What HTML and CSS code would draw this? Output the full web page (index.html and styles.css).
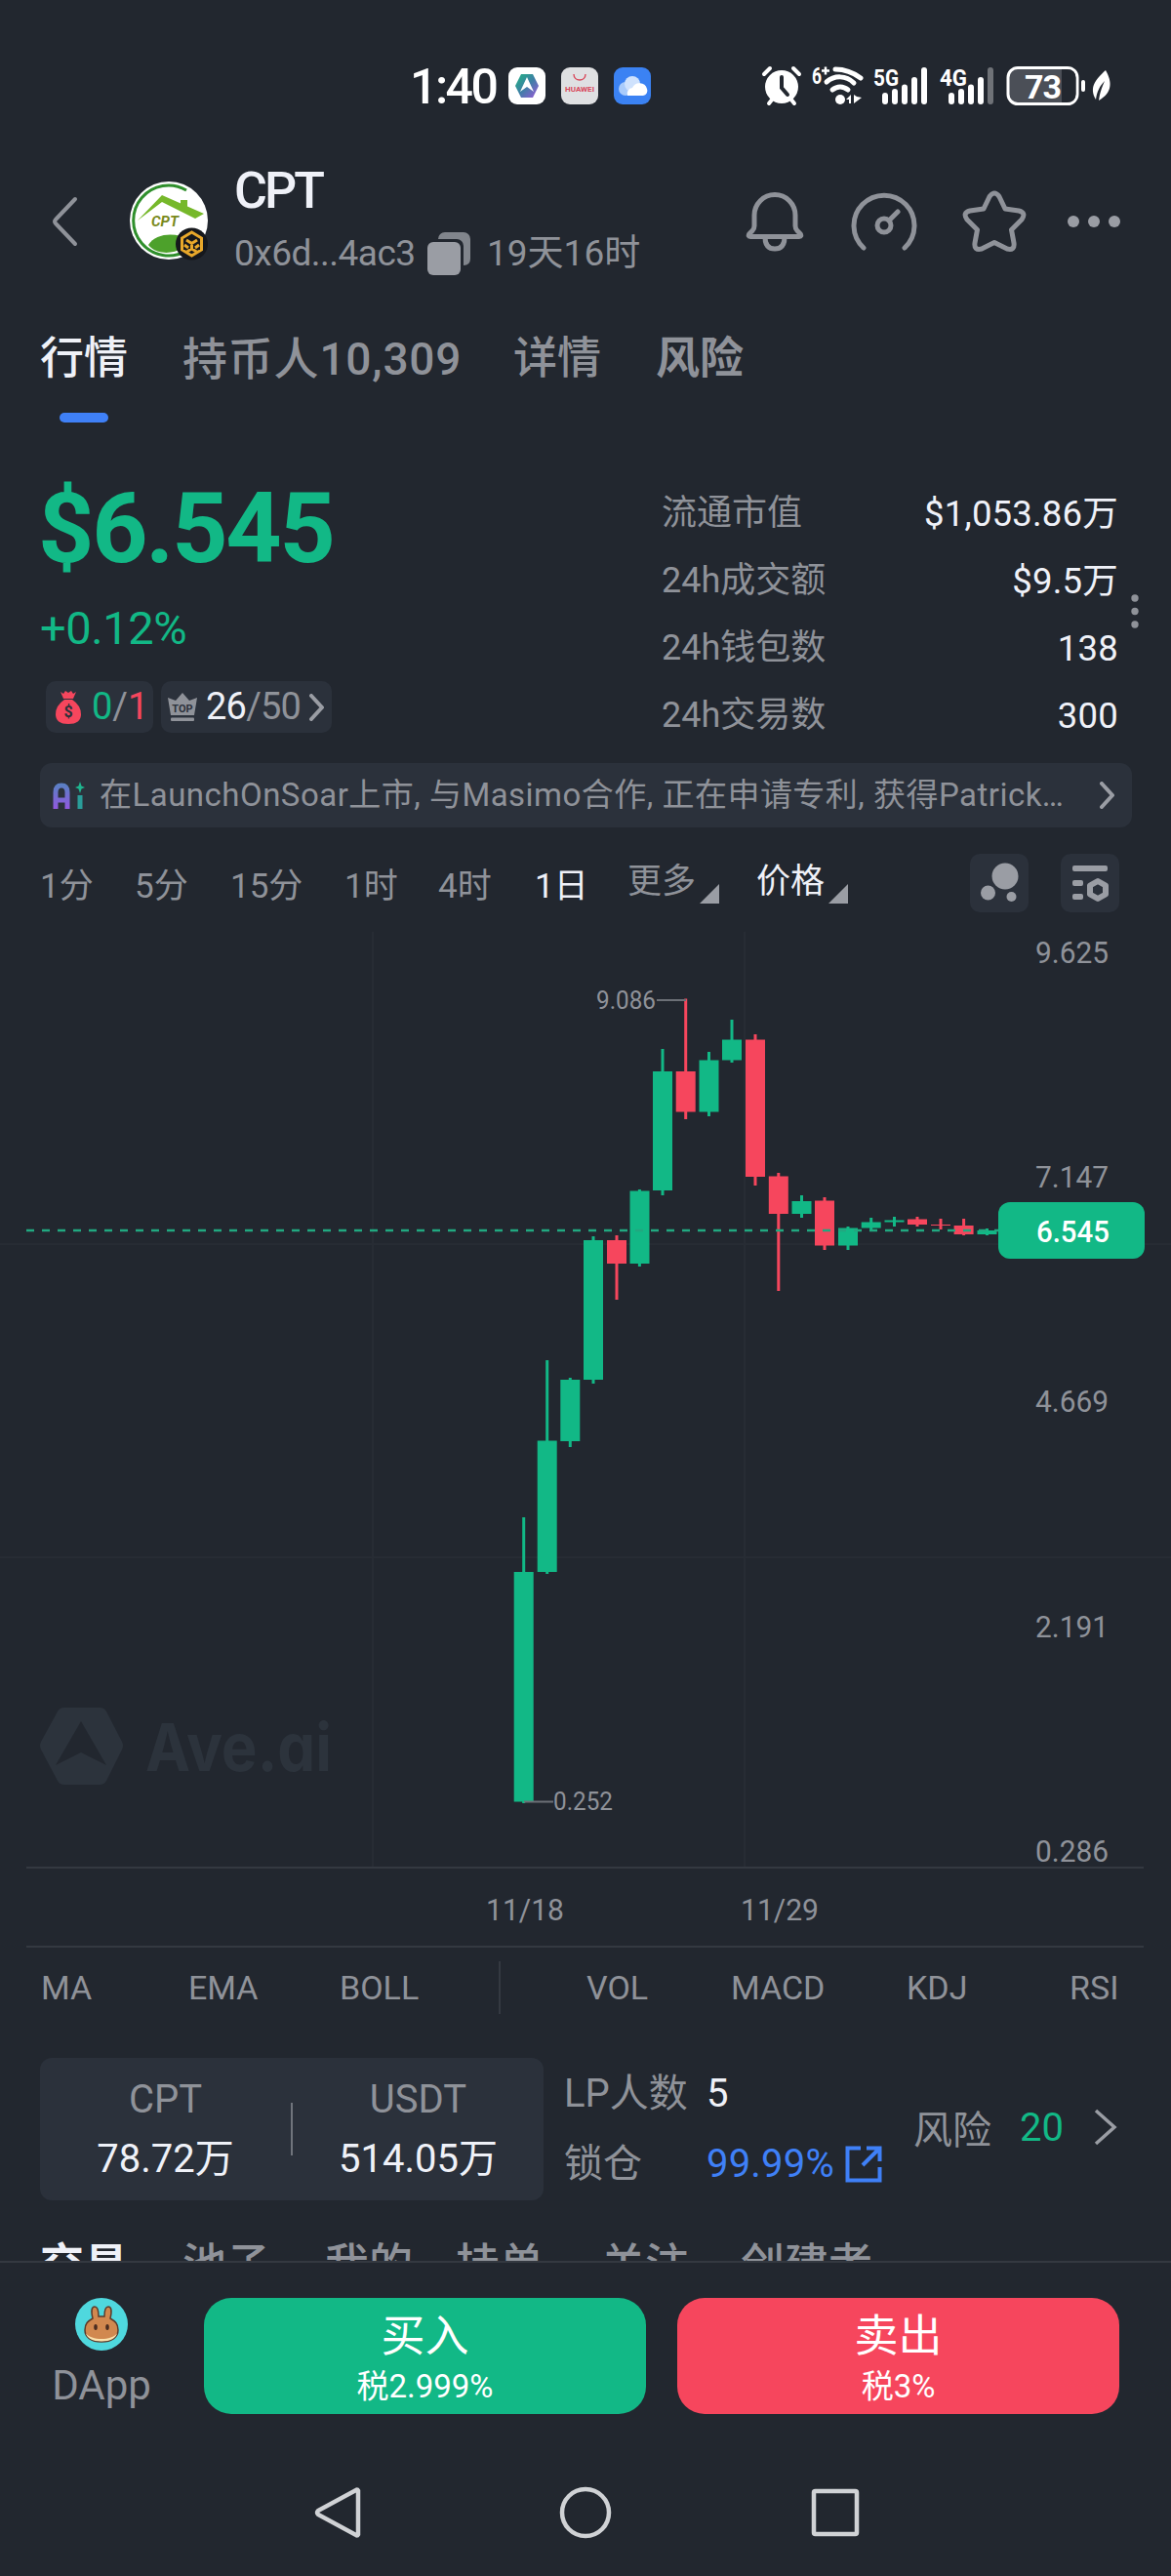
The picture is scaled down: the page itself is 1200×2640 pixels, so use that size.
FILE: index.html
```
<!DOCTYPE html>
<html lang="zh-CN">
<head>
    <meta charset="UTF-8">
    <meta name="viewport" content="width=device-width, initial-scale=1.0">
    <title>CPT 行情</title>
    <link rel="stylesheet" href="styles.css">
</head>
<body>
    <div class="phone">
        <div class="status-bar">
            <div class="clock">1:40</div>
            <svg class="app-icon" viewBox="0 0 38 38">
                <defs>
                    <linearGradient id="ave" x1="0" y1="0" x2="1" y2="1">
                        <stop offset="0.2" stop-color="#2ba08f"/>
                        <stop offset="0.5" stop-color="#3f7fa6"/>
                        <stop offset="0.9" stop-color="#8a5fd0"/>
                    </linearGradient>
                </defs>
                <rect width="38" height="38" rx="9" fill="#fff"/>
                <path d="M13 7h12l6 12-6 12H13L7 19z" fill="url(#ave)"/>
                <path d="M19 10l7 15-7-5-7 5z" fill="#fff"/>
            </svg>
            <svg class="app-icon" viewBox="0 0 38 38">
                <rect width="38" height="38" rx="9" fill="#dfe0e2"/>
                <path d="M13 7c0 8 12 8 12 0" fill="none" stroke="#d8485a" stroke-width="1.4"/>
                <text x="19" y="25" class="huawei" textLength="30" lengthAdjust="spacingAndGlyphs">HUAWEI</text>
            </svg>
            <svg class="app-icon" viewBox="0 0 38 38">
                <rect width="38" height="38" rx="9" fill="#3b82f3"/>
                <circle cx="12" cy="22" r="7" fill="#a9cbfb"/>
                <circle cx="19" cy="17" r="8" fill="#cfe2fd"/>
                <path d="M14 29a6 6 0 0 1 5-8 8 8 0 0 1 15 1 5 5 0 0 1-4 7z" fill="#fff"/>
            </svg>
            <svg class="status-icons" viewBox="0 0 362 44">
                <g fill="#fff" stroke="none">
                    <circle cx="21" cy="23" r="17"/>
                    <path d="M21 13v11l6 7" fill="none" stroke="#22272f" stroke-width="4" stroke-linecap="round"/>
                    <path d="M3 10l6-6M39 10l-6-6M8 40l4-5M34 40l-4-5" stroke="#fff" stroke-width="4" stroke-linecap="round"/>
                    <text x="52" y="20" class="net" textLength="10" lengthAdjust="spacingAndGlyphs">6</text>
                    <path d="M62 6.500h8M66 2.500v8" stroke="#fff" stroke-width="2.500"/>
                    <g fill="none" stroke="#fff" stroke-width="5" stroke-linecap="round">
                        <path d="M76 5c10 0 18 3 26 9"/>
                        <path d="M67 18c8-7 20-7 28 1"/>
                        <path d="M73 26c5-4 11-4 16 0"/>
                    </g>
                    <circle cx="81" cy="36" r="5"/>
                    <path d="M87 36l5-5v9h-2v-4zM95 31v9l8-6-5-1z"/>
                    <text x="115" y="21.500" class="net" textLength="26" lengthAdjust="spacingAndGlyphs">5G</text>
                    <text x="183" y="21.500" class="net" textLength="28" lengthAdjust="spacingAndGlyphs">4G</text>
                    <rect x="124" y="29" width="6" height="12" rx="3"/>
                    <rect x="134" y="25" width="6" height="16" rx="3"/>
                    <rect x="144" y="20.500" width="6" height="20.500" rx="3"/>
                    <rect x="154" y="13" width="6" height="28" rx="3"/>
                    <rect x="164" y="3" width="6" height="38" rx="3"/>
                    <rect x="192" y="29" width="6" height="12" rx="3"/>
                    <rect x="202" y="25" width="6" height="16" rx="3"/>
                    <rect x="212" y="20.500" width="6" height="20.500" rx="3"/>
                    <rect x="222" y="13" width="6" height="28" rx="3"/>
                    <rect x="232" y="3" width="6" height="38" rx="3" opacity=".35"/>
                </g>
                <rect x="253" y="3.500" width="71" height="37" rx="10" fill="#4b4f57" stroke="#fff" stroke-width="3"/>
                <path d="M308 5h5q9.500 0 9.500 9v16q0 9-9.500 9h-5z" fill="#22272f"/>
                <text x="288.500" y="34.500" class="battery">73</text>
                <rect x="328" y="16" width="4" height="12" rx="2" fill="#fff"/>
                <path d="M353 6c7 12 7 23-7 31 1-8 3-13 6-20-5 5-8 11-9 19-7-12-1-20 10-30z" fill="#fff"/>
            </svg>
        </div>

        <div class="header">
            <svg class="back" viewBox="0 0 30 54"><path d="M26 4L6 25q-2 2 0 4l20 21"/></svg>
            <svg class="avatar" viewBox="0 0 82 82">
                <circle cx="40" cy="40" r="40" fill="#fff"/>
                <path d="M58 9A36 36 0 1 0 58 71" fill="none" stroke="#2f8f2c" stroke-width="3"/>
                <path d="M8 40L33 14l43 19-9 5-34-17z" fill="#76b82a"/>
                <path d="M52 19h7v10l-7-3z" fill="#76b82a"/>
                <path d="M19 65c8-13 30-13 42-5-6 14-32 18-42 5z" fill="#4da12b"/>
                <text x="36" y="46" class="avatar-text" textLength="28" lengthAdjust="spacingAndGlyphs">CPT</text>
                <circle cx="63.500" cy="64" r="16.500" fill="#16181c"/>
                <g fill="none" stroke="#e9a82a" stroke-width="3">
                    <path d="M63.500 52l10 6v12l-10 6-10-6V58z"/>
                    <path d="M58 60l5.500 3.500L69 60M63.500 63v6l-5 3M63.500 69l5 3M56 65l4 3M71 65l-4 3"/>
                </g>
            </svg>
            <div class="token">
                <div class="token-name">CPT</div>
                <div class="token-meta">
                    <span class="address">0x6d...4ac3</span>
                    <svg class="copy" viewBox="0 0 44 44">
                        <path d="M11 7a7 7 0 0 1 7-7h19a7 7 0 0 1 7 7v20q0 7-7 7V14a7 7 0 0 0-7-7z" opacity=".8"/>
                        <rect y="10" width="34" height="34" rx="6"/>
                    </svg>
                    <span>19天16时</span>
                </div>
            </div>
            <div class="header-icons">
                <svg viewBox="0 0 64 64"><path d="M32 4.500a21 21 0 0 0-21 21v11q0 3-2 5l-3 3q-2 3 1 3h50q3 0 1-3l-3-3q-2-2-2-5v-11A21 21 0 0 0 32 4.500zM22 48q0 12 10 12t10-12"/></svg>
                <svg viewBox="0 0 70 64"><path d="M14 59a31 31 0 1 1 42 0M40 31l9-9"/><circle cx="35" cy="36" r="7"/></svg>
                <svg viewBox="0 0 66 64"><path d="M28 6.500q5-7 10 0l6 12.500 14 2q8 2 3 9L50.500 40.500 53 54q1 8-7 6l-13-6.500L20 60q-8 2-7-6l2.500-13.500L5 30q-5-7 3-9l14-2z"/></svg>
                <svg class="dots" viewBox="0 0 54 12"><circle cx="6" cy="6" r="6"/><circle cx="27" cy="6" r="6"/><circle cx="48" cy="6" r="6"/></svg>
            </div>
        </div>

        <div class="tabs">
            <div class="tab active">行情</div>
            <div class="tab holders">持币人10,309</div>
            <div class="tab">详情</div>
            <div class="tab bold">风险</div>
        </div>

        <div class="summary">
            <div class="summary-left">
                <div class="price">$6.545</div>
                <div class="change">+0.12%</div>
                <div class="pills">
                    <div class="pill">
                        <svg class="bag" viewBox="0 0 26 34">
                            <path d="M5 1l3 2 2-3 3 2 3-2 2 3 3-2-3 7H8z" fill="#f6465d"/>
                            <path d="M9 9h8q9 6 9 15 0 10-13 10T0 24q0-9 9-15z" fill="#f6465d"/>
                            <text x="13" y="27" class="bag-text">$</text>
                        </svg>
                        <span class="green">0</span><span>/</span><span class="red">1</span>
                    </div>
                    <div class="pill pill-top">
                        <svg class="crown" viewBox="0 0 30 30">
                            <path d="M0 5l8 3 7-8 7 8 8-3-3 18H3z"/>
                            <rect x="3" y="25.500" width="24" height="3.500" rx="1"/>
                            <text x="15" y="19.500" class="crown-text">TOP</text>
                        </svg>
                        <span class="white">26</span><span>/50</span>
                        <svg class="chev" viewBox="0 0 16 28"><path d="M3 2l11 12L3 26"/></svg>
                    </div>
                </div>
            </div>
            <div class="stats">
                <div class="stat"><span>流通市值</span><b>$1,053.86万</b></div>
                <div class="stat"><span>24h成交额</span><b>$9.5万</b></div>
                <div class="stat"><span>24h钱包数</span><b>138</b></div>
                <div class="stat"><span>24h交易数</span><b>300</b></div>
            </div>
            <svg class="more-dots" viewBox="0 0 8 36"><circle cx="4" cy="4" r="3.700"/><circle cx="4" cy="17.500" r="3.700"/><circle cx="4" cy="31" r="3.700"/></svg>
        </div>

        <div class="ai-bar">
            <svg class="ai-logo" viewBox="0 0 34 28">
                <defs>
                    <linearGradient id="ai" x1="0" y1="0" x2="0" y2="1">
                        <stop offset="0" stop-color="#5b7fc4"/>
                        <stop offset="1" stop-color="#9258e0"/>
                    </linearGradient>
                </defs>
                <path d="M3 28V11q0-7 6-7t6 7v17M3 19h12" fill="none" stroke="url(#ai)" stroke-width="5"/>
                <path d="M28 0l1.500 4.500L33 6l-3.500 1.500L28 12l-1.500-4.500L23 6l3.500-1.500z" fill="#1fb58f"/>
                <rect x="25.500" y="14" width="5" height="14" fill="#2a9d9a"/>
            </svg>
            <span class="ai-text">在LaunchOnSoar上市, 与Masimo合作, 正在申请专利, 获得Patrick…</span>
            <svg class="chev" viewBox="0 0 16 28"><path d="M3 2l11 12L3 26"/></svg>
        </div>

        <div class="timeframes">
            <span>1分</span>
            <span>5分</span>
            <span>15分</span>
            <span>1时</span>
            <span>4时</span>
            <span class="white">1日</span>
            <span class="drop">更多<i class="tri"></i></span>
            <span class="drop white">价格<i class="tri"></i></span>
            <svg class="tool" viewBox="0 0 60 60">
                <circle cx="36" cy="23" r="13.500"/><circle cx="18.500" cy="40" r="7.500"/><circle cx="42.500" cy="44" r="5"/>
            </svg>
            <svg class="tool" viewBox="0 0 60 60">
                <rect x="12" y="12" width="36" height="6" rx="2"/>
                <rect x="12" y="27" width="11" height="6" rx="2"/>
                <rect x="12" y="41" width="11" height="6" rx="2"/>
                <path d="M38 28l8 4.500v9L38 46l-8-4.500v-9z" fill="none" stroke="#9a9da4" stroke-width="6" stroke-linejoin="round"/>
            </svg>
        </div>

        <svg class="chart" viewBox="0 950 1200 1046">
            <g class="grid">
                <path d="M382 955V1914M763 955V1914M0 1275H1200M0 1596H1200"/>
            </g>
            <g class="axis-line">
                <path d="M27 1914H1172M27 1995H1172"/>
            </g>

            <g class="watermark">
                <path d="M66 1750h36q5 0 7 4l16 31q2 4 0 8l-16 32q-2 4-7 4H66q-5 0-7-4l-17-32q-2-4 0-8l17-31q2-4 7-4zM83 1764l-26 45 26-13 26 13z" fill-rule="evenodd"/>
                <text x="149" y="1815" textLength="191" lengthAdjust="spacingAndGlyphs">Ave.ai</text>
            </g>

            <g class="up">
                <path d="M536.700 1555V1848M560.700 1394V1613M584.300 1412V1483M608 1267V1418M655.400 1219V1298M679 1075V1225M726.500 1078V1144M750 1045V1089M821.500 1225V1248M869 1257V1281M892.700 1248V1262M916.500 1247V1257M1011.500 1259V1266"/>
                <rect x="526.700" y="1611" width="20" height="235.500"/>
                <rect x="550.700" y="1476.500" width="20" height="134.500"/>
                <rect x="574.300" y="1414" width="20" height="63"/>
                <rect x="598" y="1271" width="20" height="143"/>
                <rect x="645.500" y="1220.500" width="20" height="74.500"/>
                <rect x="669" y="1098" width="20" height="122"/>
                <rect x="716.500" y="1086.500" width="20" height="53"/>
                <rect x="740" y="1065.500" width="20" height="21"/>
                <rect x="811.500" y="1231" width="20" height="13"/>
                <rect x="859" y="1258.500" width="20" height="18"/>
                <rect x="882.700" y="1252.500" width="20" height="6"/>
                <rect x="906.500" y="1250.500" width="20" height="2"/>
                <rect x="1001.500" y="1261" width="20" height="4"/>
            </g>
            <g class="down">
                <path d="M632 1266V1332M702.700 1023.500V1147M774 1060V1215M797.800 1202V1323M845 1227V1281M940 1247V1257M964 1249V1260M987.600 1249V1266"/>
                <rect x="622" y="1271" width="20" height="24"/>
                <rect x="692.700" y="1098" width="20" height="41.500"/>
                <rect x="764" y="1065.500" width="20" height="140.500"/>
                <rect x="787.800" y="1205.500" width="20" height="38.500"/>
                <rect x="835" y="1230.500" width="20" height="46"/>
                <rect x="930" y="1249.500" width="20" height="5.500"/>
                <rect x="954" y="1255" width="20" height="1"/>
                <rect x="977.600" y="1256" width="20" height="9"/>
            </g>
            <path class="last-line" d="M27 1261H1023"/>

            <g class="mark">
                <path d="M673 1025H703M537 1846.500H567"/>
                <text x="611" y="1034" textLength="61" lengthAdjust="spacingAndGlyphs">9.086</text>
                <text x="567" y="1855" textLength="61" lengthAdjust="spacingAndGlyphs">0.252</text>
            </g>
            <g class="axis">
                <text x="1061" y="987" textLength="75" lengthAdjust="spacingAndGlyphs">9.625</text>
                <text x="1061" y="1217" textLength="75" lengthAdjust="spacingAndGlyphs">7.147</text>
                <text x="1061" y="1447" textLength="75" lengthAdjust="spacingAndGlyphs">4.669</text>
                <text x="1061" y="1678" textLength="75" lengthAdjust="spacingAndGlyphs">2.191</text>
                <text x="1061" y="1908" textLength="75" lengthAdjust="spacingAndGlyphs">0.286</text>
                <text x="498" y="1968" textLength="80" lengthAdjust="spacingAndGlyphs">11/18</text>
                <text x="759" y="1968" textLength="80" lengthAdjust="spacingAndGlyphs">11/29</text>
                <rect x="1023" y="1232" width="150" height="58" rx="12" fill="#12b886"/>
                <text x="1062" y="1273" class="tag" textLength="75" lengthAdjust="spacingAndGlyphs">6.545</text>
            </g>
        </svg>

        <div class="indicators">
            <span>MA</span>
            <span>EMA</span>
            <span>BOLL</span>
            <i class="divider"></i>
            <span>VOL</span>
            <span>MACD</span>
            <span>KDJ</span>
            <span>RSI</span>
        </div>

        <div class="pool">
            <div class="pool-card">
                <div class="pool-item"><span>CPT</span><b>78.72万</b></div>
                <i class="pool-divider"></i>
                <div class="pool-item"><span>USDT</span><b>514.05万</b></div>
            </div>
            <div class="lp">
                <div class="lp-row"><span>LP人数</span><b>5</b></div>
                <div class="lp-row">
                    <span>锁仓</span><b class="blue">99.99%</b>
                    <svg class="link" viewBox="0 0 38 38"><path d="M16 2.500H2.500v33h33V22M22 2.500h13.500V16M35 3L18 20"/></svg>
                </div>
            </div>
            <div class="risk">
                <span>风险</span>
                <b class="green">20</b>
                <svg class="risk-chev" viewBox="0 0 24 38"><path d="M2 2l19 17L2 36"/></svg>
            </div>
        </div>

        <div class="sub-tabs">
            <span class="white">交易</span>
            <span>池子</span>
            <span>我的</span>
            <span>挂单</span>
            <span>关注</span>
            <span>创建者</span>
        </div>

        <div class="action-bar">
            <div class="dapp">
                <svg viewBox="0 0 54 54">
                    <circle cx="27" cy="27" r="27" fill="#4fd8de"/>
                    <g stroke="#5b3a2b" stroke-width="1.500">
                        <path d="M27 45c-11 0-17-5-17-12s3-9 8-12c-2-8-1-12 2-12s4 4 4 10h6c0-6 1-10 4-10s4 4 2 12c5 3 8 5 8 12s-6 12-17 12z" fill="#d1884f"/>
                    </g>
                    <path d="M11 36c5 8 27 8 32 0-1 5-7 8.500-16 8.500S12 41 11 36z" fill="#fbe3ae"/>
                    <ellipse cx="21" cy="30" rx="1.800" ry="3" fill="#4a2c20"/>
                    <ellipse cx="33" cy="30" rx="1.800" ry="3" fill="#4a2c20"/>
                </svg>
                <span>DApp</span>
            </div>
            <div class="btn btn-buy"><b>买入</b><span>税2.999%</span></div>
            <div class="btn btn-sell"><b>卖出</b><span>税3%</span></div>
        </div>

        <div class="nav-bar">
            <svg viewBox="0 0 54 54"><path d="M49 4.500v45q-1 2-3 0L8 29q-2-2 0-4L46 4.500q2-2 3 0z"/></svg>
            <svg viewBox="0 0 54 54"><circle cx="27" cy="27" r="24"/></svg>
            <svg viewBox="0 0 54 54"><rect x="6" y="5" width="44" height="44" rx="1.500"/></svg>
        </div>
    </div>
</body>
</html>
```
FILE: styles.css
```
* {
    margin: 0;
    padding: 0;
    box-sizing: border-box;
}

body {
    width: 1200px;
    background: #22272f;
    font-family: Roboto, 'Noto Sans CJK SC', sans-serif;
    color: #8f9299;
}

b {
    font-weight: 400;
    color: #eff1f8;
}

i {
    font-style: normal;
}

svg {
    display: block;
    flex-shrink: 0;
}

.phone {
    height: 2640px;
    overflow: hidden;
}

.green, b.green {
    color: #12b886;
}

.red {
    color: #f6465d;
}

.blue, b.blue {
    color: #3f80f7;
}

.white {
    color: #eff1f8;
}

/* status bar */
.status-bar {
    height: 176px;
    display: flex;
    align-items: center;
    padding-left: 420px;
}

.clock {
    width: 101px;
    font-size: 50px;
    line-height: 50px;
    padding-top: 2px;
    font-weight: 500;
    letter-spacing: -2.5px;
    color: #fff;
}

.app-icon {
    width: 38px;
    height: 38px;
    margin-right: 16px;
}

.huawei {
    font-size: 8px;
    font-weight: 700;
    fill: #d8485a;
    text-anchor: middle;
}

.status-icons {
    width: 362px;
    height: 44px;
    margin-left: 97px;
}

.net {
    font-size: 23px;
    font-weight: 700;
    fill: #fff;
}

.battery {
    font-size: 34px;
    font-weight: 700;
    letter-spacing: -1px;
    fill: #fff;
    text-anchor: middle;
}

/* token header */
.header {
    height: 102px;
    display: flex;
    align-items: center;
    padding: 0 52px 0 51px;
}

.back {
    width: 30px;
    height: 54px;
}

.back path {
    fill: none;
    stroke: #8f9299;
    stroke-width: 4;
    stroke-linecap: round;
}

.avatar {
    width: 82px;
    height: 82px;
    margin-left: 52px;
}

.avatar-text {
    font-size: 15px;
    font-weight: 700;
    font-style: italic;
    fill: #7a8a1c;
    text-anchor: middle;
}

.token {
    margin-left: 25px;
    padding-top: 2px;
}

.token-name {
    height: 64px;
    line-height: 64px;
    font-size: 52px;
    font-weight: 500;
    letter-spacing: -3px;
    color: #eff1f8;
}

.token-meta {
    height: 64px;
    line-height: 64px;
    font-size: 37px;
    display: flex;
    align-items: center;
}

.address {
    width: 198px;
    letter-spacing: -0.5px;
}

.copy {
    width: 44px;
    height: 44px;
    margin-right: 17px;
    fill: #9a9da4;
}

.header-icons {
    margin-left: auto;
    display: flex;
    align-items: center;
}

.header-icons svg {
    width: 64px;
    height: 64px;
    fill: none;
    stroke: #8f9299;
    stroke-width: 5;
    stroke-linecap: round;
    stroke-linejoin: round;
    margin-right: 45px;
}

.header-icons svg:nth-child(2) {
    width: 70px;
}

.header-icons svg:nth-child(3) {
    width: 66px;
    margin-right: 42px;
}

.header-icons .dots {
    width: 54px;
    height: 12px;
    margin: 0;
    fill: #9a9da4;
    stroke: none;
}

/* tabs */
.tabs {
    height: 178px;
    display: grid;
    grid-template-columns: 146px 339px 146px auto;
    align-items: center;
    padding: 2px 0 0 41px;
    font-size: 45px;
    font-weight: 500;
}

.tab {
    position: relative;
    line-height: 60px;
    white-space: nowrap;
}

.tab.holders {
    font-size: 46px;
    letter-spacing: 0.8px;
}

.tab.bold {
    font-weight: 700;
}

.tab.active {
    color: #eff1f8;
}

.tab.active::after {
    content: '';
    position: absolute;
    left: 20px;
    top: 85px;
    width: 50px;
    height: 10px;
    border-radius: 5px;
    background: #3f80f7;
}

/* price and stats */
.summary {
    position: relative;
    height: 310px;
    display: flex;
    justify-content: space-between;
    padding: 36px 54px 0 41px;
}

.price {
    margin-left: -2px;
    font-size: 100px;
    line-height: 100px;
    font-weight: 700;
    letter-spacing: -2.2px;
    color: #12b886;
}

.change {
    margin-top: 29px;
    font-size: 47px;
    line-height: 46px;
    letter-spacing: -0.4px;
    color: #12b886;
}

.pills {
    margin: 31px 0 0 6px;
    display: flex;
    gap: 8px;
    font-size: 38px;
    line-height: 53px;
}

.pill {
    height: 53px;
    width: 110px;
    padding-left: 10px;
    display: flex;
    align-items: center;
    border-radius: 10px;
    background: #2b313b;
}

.pill-top {
    width: 175px;
    padding-left: 7px;
    letter-spacing: -0.8px;
}

.bag {
    width: 26px;
    height: 34px;
    margin-right: 11px;
}

.bag-text {
    font-size: 16px;
    font-weight: 700;
    fill: #2b313b;
    text-anchor: middle;
}

.crown {
    width: 30px;
    height: 30px;
    margin-right: 9px;
    fill: #8f9299;
}

.crown-text {
    font-size: 11px;
    font-weight: 700;
    letter-spacing: 0;
    fill: #2b313b;
    text-anchor: middle;
}

.chev {
    width: 16px;
    height: 28px;
    fill: none;
    stroke: #9a9da4;
    stroke-width: 4;
    stroke-linecap: round;
    stroke-linejoin: round;
}

.pill .chev {
    margin-left: auto;
    margin-right: 8px;
}

.stats {
    width: 468px;
    font-size: 36px;
}

.stat {
    height: 69px;
    line-height: 69px;
    display: flex;
    justify-content: space-between;
}

.stat b {
    font-size: 36.5px;
    letter-spacing: 0.2px;
}

.more-dots {
    position: absolute;
    left: 1159px;
    top: 153px;
    width: 8px;
    height: 36px;
    fill: #8f9299;
}

/* ai news */
.ai-bar {
    margin: 16px 40px 0 41px;
    height: 66px;
    padding: 0 18px 0 13px;
    display: flex;
    align-items: center;
    border-radius: 12px;
    background: #2b313b;
}

.ai-logo {
    width: 34px;
    height: 28px;
}

.ai-text {
    flex: 1;
    margin-left: 14px;
    font-size: 33px;
    line-height: 66px;
    letter-spacing: 0.48px;
    white-space: nowrap;
}

/* timeframes */
.timeframes {
    height: 102px;
    padding: 10px 0 0 41px;
    display: grid;
    grid-template-columns: 97px 98px 117px 96px 99px 95px 132px 219px 93px 60px;
    align-items: center;
    font-size: 35px;
}

.drop {
    display: flex;
    align-items: flex-end;
    line-height: 42px;
}

.tri {
    width: 20px;
    height: 20px;
    margin: 0 0 -1px 4px;
    background: #9a9da4;
    clip-path: polygon(100% 0, 100% 100%, 0 100%);
}

.tool {
    width: 60px;
    height: 60px;
    margin-top: 2px;
    border-radius: 10px;
    background: #2b313b;
    fill: #9a9da4;
}

/* candles */
.chart {
    width: 1200px;
    height: 1046px;
}

.chart path {
    fill: none;
}

.grid path {
    stroke: #272c34;
    stroke-width: 2;
}

.axis-line path {
    stroke: #343941;
    stroke-width: 2;
}

.chart .watermark path, .watermark text {
    fill: #2c333c;
}

.watermark text {
    font-family: Inter, sans-serif;
    font-size: 68px;
    font-weight: 700;
    font-feature-settings: 'cv11';
}

.up rect {
    fill: #12b886;
}

.up path {
    stroke: #12b886;
    stroke-width: 3;
}

.down rect {
    fill: #f6465d;
}

.down path {
    stroke: #f6465d;
    stroke-width: 3;
}

.chart .last-line {
    stroke: #21a880;
    stroke-width: 2.5;
    stroke-dasharray: 8 8;
}

.mark path {
    stroke: #6c7077;
    stroke-width: 2;
}

.mark text {
    font-size: 26px;
    fill: #8f9299;
}

.axis text {
    font-size: 31px;
    fill: #8f9299;
}

.axis .tag {
    font-weight: 500;
    fill: #fff;
}

/* indicators */
.indicators {
    height: 82px;
    padding-left: 42px;
    display: grid;
    grid-template-columns: 151px 155px 162px 91px 148px 180px 167px auto;
    align-items: center;
    font-size: 34px;
}

.divider {
    width: 2px;
    height: 54px;
    margin-left: 1px;
    background: #343941;
}

/* pool */
.pool {
    margin-top: 31px;
    height: 146px;
    padding: 0 55px 0 41px;
    display: flex;
    font-size: 40px;
}

.pool-card {
    width: 516px;
    display: flex;
    align-items: center;
    border-radius: 12px;
    background: #2b313b;
}

.pool-item {
    flex: 1;
    display: flex;
    flex-direction: column;
    align-items: center;
    line-height: 61px;
}

.pool-divider {
    width: 2px;
    height: 54px;
    background: #70747c;
}

.lp {
    margin-left: 21px;
    width: 358px;
}

.lp-row {
    height: 72px;
    line-height: 72px;
    padding-top: 1px;
    display: flex;
    align-items: center;
}

.lp-row span {
    width: 146px;
}

.lp-row .blue {
    letter-spacing: 0.2px;
}

.link {
    width: 38px;
    height: 38px;
    margin-left: 11px;
    fill: none;
    stroke: #3f80f7;
    stroke-width: 4;
}

.risk {
    flex: 1;
    height: 142px;
    display: flex;
    align-items: center;
}

.risk .green {
    margin-left: 29px;
}

.risk-chev {
    width: 24px;
    height: 38px;
    margin-left: auto;
    fill: none;
    stroke: #9a9da4;
    stroke-width: 3.5;
}

/* list tabs, scrolled under the action bar */
.sub-tabs {
    height: 62px;
    padding: 37px 0 0 41px;
    display: grid;
    grid-template-columns: 146px 146px 134px 149px 143px auto;
    overflow: hidden;
    font-size: 45px;
    line-height: 60px;
    font-weight: 500;
}

.sub-tabs .white {
    font-weight: 700;
}

/* buy and sell */
.action-bar {
    height: 194px;
    padding: 36px 53px 0 41px;
    display: flex;
    border-top: 2px solid #343941;
}

.dapp {
    width: 126px;
    margin-right: 42px;
    display: flex;
    flex-direction: column;
    align-items: center;
    font-size: 42px;
    line-height: 50px;
}

.dapp svg {
    width: 54px;
    height: 54px;
    margin-bottom: 11px;
}

.btn {
    width: 453px;
    height: 119px;
    display: flex;
    flex-direction: column;
    align-items: center;
    border-radius: 28px;
    font-size: 33px;
    line-height: 44px;
    padding-top: 11px;
    color: #fff;
}

.btn b {
    font-size: 45px;
    line-height: 58px;
    font-weight: 400;
    color: #fff;
}

.btn-buy {
    background: #12b886;
    margin-right: 32px;
}

.btn-sell {
    background: #f6465d;
}

/* system navigation */
.nav-bar {
    height: 128px;
    display: flex;
    align-items: center;
    gap: 201px;
    padding-left: 318px;
}

.nav-bar svg {
    width: 54px;
    height: 54px;
    fill: none;
    stroke: #d0d2d5;
    stroke-width: 4.500;
}
```
